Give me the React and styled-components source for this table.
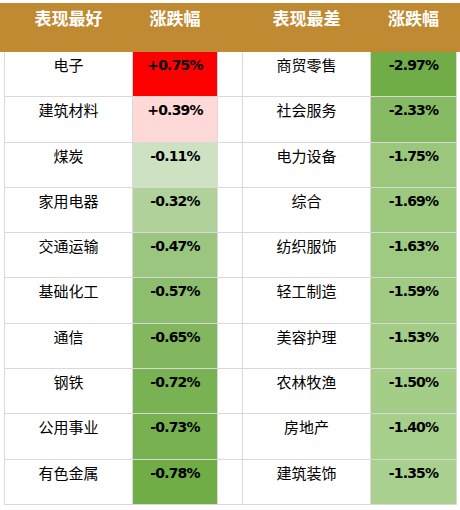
import styled, { createGlobalStyle } from "styled-components";

const GlobalStyle = createGlobalStyle`
  body {
    margin: 0;
    background: #fff;
    font-family: "Noto Sans CJK SC", "DejaVu Sans", sans-serif;
  }
`;

const COLS = "127px 84px 24px 127px 85px";

const best = [
  ["电子", 0.75],
  ["建筑材料", 0.39],
  ["煤炭", -0.11],
  ["家用电器", -0.32],
  ["交通运输", -0.47],
  ["基础化工", -0.57],
  ["通信", -0.65],
  ["钢铁", -0.72],
  ["公用事业", -0.73],
  ["有色金属", -0.78],
];

const worst = [
  ["商贸零售", -2.97],
  ["社会服务", -2.33],
  ["电力设备", -1.75],
  ["综合", -1.69],
  ["纺织服饰", -1.63],
  ["轻工制造", -1.59],
  ["美容护理", -1.53],
  ["农林牧渔", -1.5],
  ["房地产", -1.4],
  ["建筑装饰", -1.35],
];

const mix = (a, b, t) =>
  `rgb(${a.map((v, i) => Math.round(v + (b[i] - v) * t)).join(",")})`;

// colour scale per column, like a spreadsheet conditional format
const scale = (list) => {
  const neg = list.map((r) => r[1]).filter((v) => v < 0);
  const pos = list.map((r) => r[1]).filter((v) => v > 0);
  const nLo = Math.max(...neg);
  const nHi = Math.min(...neg);
  const pLo = Math.min(...pos);
  const pHi = Math.max(...pos);
  const light = neg.length && nHi < -1 ? [169, 208, 142] : [206, 226, 194];
  return (v) => {
    if (v > 0) {
      const t = pHi === pLo ? 1 : (v - pLo) / (pHi - pLo);
      return mix([255, 216, 216], [255, 0, 0], t);
    }
    const t = nHi === nLo ? 1 : (v - nLo) / (nHi - nLo);
    return mix(light, [112, 173, 71], t);
  };
};

const fmt = (v) => (v > 0 ? `+${v.toFixed(2)}%` : `${v.toFixed(2)}%`);

const Page = styled.div`
  width: 460px;
  padding-top: 3px;
`;

const Header = styled.div`
  display: grid;
  grid-template-columns: ${COLS};
  column-gap: 1px;
  height: 49px;
  padding-left: 5px;
  background: #bf8a31;
`;

const HeadCell = styled.div`
  padding-top: 5px;
  text-align: center;
  color: #fff;
  font-size: 17px;
  font-weight: 700;
  line-height: 20px;
`;

const Grid = styled.div`
  display: grid;
  grid-template-columns: ${COLS};
  grid-auto-rows: 44.3px;
  gap: 1px;
  width: max-content;
  margin-left: 4px;
  padding: 0 1px 1px;
  background: #d9d9d9;
`;

const Cell = styled.div`
  padding-top: 4px;
  text-align: center;
  background: ${(p) => p.$bg || "#fff"};
  color: #000;
  font-size: 15px;
  line-height: 18px;
`;

const Pct = styled(Cell)`
  font-family: "DejaVu Sans", sans-serif;
  font-size: 14px;
  font-weight: 700;
  letter-spacing: -0.8px;
`;

export default function App() {
  const left = scale(best);
  const right = scale(worst);
  return (
    <Page>
      <GlobalStyle />
      <Header>
        <HeadCell>表现最好</HeadCell>
        <HeadCell>涨跌幅</HeadCell>
        <div />
        <HeadCell>表现最差</HeadCell>
        <HeadCell>涨跌幅</HeadCell>
      </Header>
      <Grid>
        {best.map(([name, v], i) => {
          const [name2, v2] = worst[i];
          return [
            <Cell key={`a${i}`}>{name}</Cell>,
            <Pct key={`b${i}`} $bg={left(v)}>
              {fmt(v)}
            </Pct>,
            <Cell key={`c${i}`} />,
            <Cell key={`d${i}`}>{name2}</Cell>,
            <Pct key={`e${i}`} $bg={right(v2)}>
              {fmt(v2)}
            </Pct>,
          ];
        })}
      </Grid>
    </Page>
  );
}
